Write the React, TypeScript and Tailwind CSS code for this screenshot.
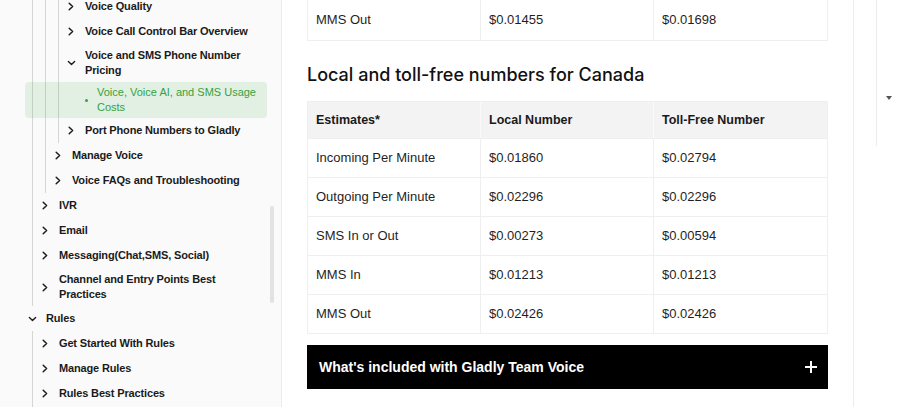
import type { ReactNode } from "react";

const sans = "font-['Liberation_Sans',Arial,sans-serif]";

function ChevronRight() {
  return (
    <svg width="8" height="9" viewBox="0 0 8 9" fill="none">
      <path d="M2.2 1.2L5.6 4.5L2.2 7.8" stroke="#1c1c1c" strokeWidth="1.5" strokeLinecap="round" strokeLinejoin="round" />
    </svg>
  );
}

function ChevronDown() {
  return (
    <svg width="9" height="8" viewBox="0 0 9 8" fill="none">
      <path d="M1.4 2.6L4.5 5.6L7.6 2.6" stroke="#1c1c1c" strokeWidth="1.4" strokeLinecap="round" strokeLinejoin="round" />
    </svg>
  );
}

function Row({ label, open = false }: { label: string; open?: boolean }) {
  return (
    <div className="flex items-center gap-[7px] pr-[12px] py-[4px] min-h-[25px]">
      <span className="w-[14px] shrink-0 flex justify-center">
        {open ? <ChevronDown /> : <ChevronRight />}
      </span>
      <span className="leading-[15px]">{label}</span>
    </div>
  );
}

function Group({ children, line = true }: { children: ReactNode; line?: boolean }) {
  return (
    <div
      className={
        line
          ? "ml-[7px] border-l border-[#d5d5d5] pl-[5px]"
          : "ml-[7px] border-l border-transparent pl-[5px]"
      }
    >
      {children}
    </div>
  );
}

function Sidebar() {
  return (
    <aside className="relative w-[282px] shrink-0 h-full overflow-hidden bg-[#fafafa] border-r border-[#ececec]">
      <nav
        className={`${sans} -mt-[6px] pl-[25px] pr-[14px] text-[11px] font-bold tracking-[-0.15px] text-[#1a1a1a]`}
      >
        <Group>
          <Group>
            <Group>
              <Row label="Voice Quality" />
              <Row label="Voice Call Control Bar Overview" />
              <Row label="Voice and SMS Phone Number Pricing" open />
              <Group line={false}>
                <div className="-ml-[52px] pl-[52px] flex items-center gap-[6px] py-[3px] pr-[4px] rounded-[4px] bg-[#3dae48]/[0.13] text-[#38a03e] font-normal tracking-normal">
                  <span className="w-[14px] shrink-0 flex justify-center pl-[4px]">
                    <span className="w-[3px] h-[3px] rounded-full bg-[#38a03e]" />
                  </span>
                  <span className="leading-[15px]">Voice, Voice AI, and SMS Usage Costs</span>
                </div>
              </Group>
              <Row label="Port Phone Numbers to Gladly" />
            </Group>
            <Row label="Manage Voice" />
            <Row label="Voice FAQs and Troubleshooting" />
          </Group>
          <Row label="IVR" />
          <Row label="Email" />
          <Row label="Messaging(Chat,SMS, Social)" />
          <Row label="Channel and Entry Points Best Practices" />
        </Group>
        <Row label="Rules" open />
        <Group>
          <Row label="Get Started With Rules" />
          <Row label="Manage Rules" />
          <Row label="Rules Best Practices" />
          <div className="h-[40px]" />
        </Group>
      </nav>
      {/* scrollbar thumb */}
      <div className="absolute left-[270px] top-[206px] w-[4px] h-[97px] rounded-full bg-[#e2e2e2]" />
    </aside>
  );
}

const canada = [
  ["Incoming Per Minute", "$0.01860", "$0.02794"],
  ["Outgoing Per Minute", "$0.02296", "$0.02296"],
  ["SMS In or Out", "$0.00273", "$0.00594"],
  ["MMS In", "$0.01213", "$0.01213"],
  ["MMS Out", "$0.02426", "$0.02426"],
];

function Cell({ children, last = false }: { children: ReactNode; last?: boolean }) {
  return (
    <div className={last ? "flex items-center px-[8px]" : "flex items-center px-[8px] border-r border-[#efefef]"}>
      {children}
    </div>
  );
}

function Content() {
  return (
    <main className={`${sans} w-[572px] shrink-0 h-full border-r border-[#ececec] px-[25px] text-[13px] text-[#1f1f1f]`}>
      <div className="grid grid-cols-3 h-[41px] border-x border-b border-[#efefef]">
        <Cell>MMS Out</Cell>
        <Cell>$0.01455</Cell>
        <Cell last>$0.01698</Cell>
      </div>

      <h2 className="mt-[22px] font-['Inter',sans-serif] text-[18px] leading-[24px] font-medium text-[#111]">
        Local and toll-free numbers for Canada
      </h2>

      <div className="mt-[14px] border border-[#efefef]">
        <div className="grid grid-cols-3 h-[36px] bg-[#f3f3f3] font-bold text-[12.5px] text-[#1a1a1a]">
          <div className="flex items-center px-[8px] border-r border-[#fafafa]">Estimates*</div>
          <div className="flex items-center px-[8px] border-r border-[#fafafa]">Local Number</div>
          <div className="flex items-center px-[8px]">Toll-Free Number</div>
        </div>
        {canada.map((r) => (
          <div key={r[0]} className="grid grid-cols-3 h-[39px] border-t border-[#efefef]">
            <Cell>{r[0]}</Cell>
            <Cell>{r[1]}</Cell>
            <Cell last>{r[2]}</Cell>
          </div>
        ))}
      </div>

      <div className="mt-[11px] h-[44px] bg-black flex items-center justify-between pl-[12px] pr-[10px]">
        <span className="text-white font-bold text-[14px]">What's included with Gladly Team Voice</span>
        <svg width="14" height="14" viewBox="0 0 14 14">
          <path d="M7 1v12M1 7h12" stroke="#fff" strokeWidth="2" />
        </svg>
      </div>
    </main>
  );
}

export default function App() {
  return (
    <div className="w-[900px] h-[407px] flex overflow-hidden bg-white">
      <Sidebar />
      <Content />
      <div className="flex-1 flex">
        <div className="w-[23px] h-[146px] border-r border-[#ececec]" />
        <div className="flex-1 flex justify-center pt-[96px]">
          <svg width="6" height="4" viewBox="0 0 6 4">
            <path d="M0 0h6L3 4z" fill="#555" />
          </svg>
        </div>
      </div>
    </div>
  );
}
